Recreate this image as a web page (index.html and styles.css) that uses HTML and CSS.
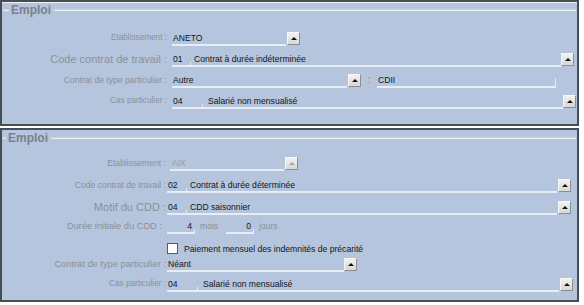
FILE: index.html
```html
<!DOCTYPE html>
<html lang="fr">
  <head>
    <meta charset="utf-8">
    <title>Emploi</title>
    <link rel="stylesheet" href="styles.css">
  </head>
  <body>
    <section class="panel panel-top">
      <div class="legend"><span>Emploi</span></div>

      <div class="row first">
        <span class="lbl small">Etablissement :</span>
        <span class="fld" style="width:113px">ANETO</span>
        <span class="btn"></span>
      </div>
      <div class="row">
        <span class="lbl big">Code contrat de travail :</span>
        <span class="fld tick" style="width:18px">01</span>
        <span class="fld pad3" style="width:367px">Contrat à durée indéterminée</span>
        <span class="btn flush"></span>
      </div>
      <div class="row">
        <span class="lbl">Contrat de type particulier :</span>
        <span class="fld" style="width:174px">Autre</span>
        <span class="btn"></span>
        <span class="sep">:</span>
        <span class="fld tick tall" style="width:178px">CDII</span>
      </div>
      <div class="row">
        <span class="lbl small">Cas particulier :</span>
        <span class="fld tick" style="width:30px">04</span>
        <span class="fld pad5" style="width:355px">Salarié non mensualisé</span>
        <span class="btn flush"></span>
      </div>
    </section>

    <section class="panel panel-bottom">
      <div class="legend"><span>Emploi</span></div>

      <div class="row first">
        <span class="lbl">Etablissement :</span>
        <span class="fld off" style="width:112px">AIX</span>
        <span class="btn disabled"></span>
      </div>
      <div class="row gap8">
        <span class="lbl">Code contrat de travail :</span>
        <span class="fld tick" style="width:19px">02</span>
        <span class="fld pad3" style="width:367px">Contrat à durée déterminée</span>
        <span class="btn"></span>
      </div>
      <div class="row gap8">
        <span class="lbl big">Motif du CDD :</span>
        <span class="fld tick" style="width:19px">04</span>
        <span class="fld pad3" style="width:367px">CDD saisonnier</span>
        <span class="btn"></span>
      </div>
      <div class="row gap5">
        <span class="lbl mid inset">Durée initiale du CDD :</span>
        <span class="fld num tick" style="width:25px">4</span>
        <span class="unit" style="width:26px">mois</span>
        <span class="fld num tick" style="width:25px">0</span>
        <span class="unit">jours</span>
      </div>
      <div class="check-row">
        <span class="lbl"></span>
        <span class="chk"></span>
        <span class="chk-text">Paiement mensuel des indemnités de précarité</span>
      </div>
      <div class="row gap4">
        <span class="lbl mid">Contrat de type particulier :</span>
        <span class="fld" style="width:176px">Néant</span>
        <span class="btn flush"></span>
      </div>
      <div class="row gap6">
        <span class="lbl small">Cas particulier :</span>
        <span class="fld tick" style="width:30px">04</span>
        <span class="fld pad5" style="width:356px">Salarié non mensualisé</span>
        <span class="btn"></span>
      </div>
    </section>
  </body>
</html>
```

FILE: styles.css
```css
body {
  margin: 0;
  background: #fff;
  font-family: "Liberation Sans", Arial, sans-serif;
  font-size: 8.6px;
  color: #141414;
}

.panel {
  width: 575px;
  border: 2px solid #474c55;
  background: #b5c5de;
}
.panel-top {
  padding-bottom: 15px;
  box-shadow: inset 0 1px #eef1f6;
}
.panel-bottom {
  margin-top: 2px;
  padding-bottom: 8px;
}

/* group box title with etched line */
.legend {
  display: flex;
  align-items: center;
  height: 16px;
  font-size: 12px;
  font-weight: bold;
  color: #7b8089;
}
.legend::before,
.legend::after {
  content: "";
  border-top: 1px solid #cbd3de;
  border-bottom: 1px solid #e9edf4;
}
.legend::before {
  width: 6px;
  margin: 0 2px 0 1px;
}
.legend::after {
  flex: 1;
  margin: 0 1px 0 3px;
}
.panel-bottom .legend::before {
  width: 3px;
}

.row {
  display: flex;
  align-items: flex-start;
  margin-top: 7px;
}
.panel-top .row.first { margin-top: 14px; }
.panel-bottom .row.first { margin-top: 11px; }
.row.gap8 { margin-top: 8px; }
.row.gap6 { margin-top: 6px; }
.row.gap5 { margin-top: 5px; }
.row.gap4 { margin-top: 4px; }

.lbl {
  flex: none;
  width: 165px;
  margin-right: 5px;
  text-align: right;
  line-height: 12px;
  white-space: nowrap;
  color: #8b9099;
}
.panel-bottom .lbl {
  width: 164px;
  margin-right: 1px;
}
.lbl.small { font-size: 8.2px; }
.lbl.mid { font-size: 9.3px; }
.lbl.big { font-size: 11px; }
.lbl.inset {
  box-sizing: border-box;
  padding-right: 4px;
}

.fld {
  position: relative;
  flex: none;
  box-sizing: content-box;
  height: 12px;
  line-height: 12px;
  padding-left: 1px;
  border-bottom: 2px solid #e8edf5;
  white-space: nowrap;
  overflow: hidden;
}
.fld.pad3 { padding-left: 3px; }
.fld.pad5 { padding-left: 5px; }
.fld.off {
  margin-left: 3px;
  padding-left: 2px;
  color: #939aa5;
}
.fld.num {
  text-align: right;
  padding: 0 3px 0 0;
}
.fld.tick::after {
  content: "";
  position: absolute;
  right: 0;
  bottom: 0;
  width: 1px;
  height: 3px;
  background: #e8edf5;
}
.fld.tall::after { height: 8px; }

.unit {
  flex: none;
  margin-left: 5px;
  line-height: 12px;
  color: #8b9099;
}

.sep {
  flex: none;
  width: 16px;
  text-align: center;
  line-height: 12px;
  font-size: 10px;
  color: #8b9099;
}

/* little combo arrow button */
.btn {
  flex: none;
  display: flex;
  align-items: center;
  justify-content: center;
  box-sizing: border-box;
  width: 13px;
  height: 13px;
  margin-left: 1px;
  border: 1px solid;
  border-color: #f7f7f7 #8e8e8e #8e8e8e #f7f7f7;
  background: linear-gradient(#f1f1f1, #d8d8d8);
}
.btn.flush { margin-left: 0; }
.btn::before {
  content: "";
  border-left: 3px solid transparent;
  border-right: 3px solid transparent;
  border-bottom: 3px solid #111;
}
.btn.disabled::before { border-bottom-color: #a6a6a6; }

.check-row {
  display: flex;
  align-items: center;
  margin-top: 9px;
  height: 11px;
}
.chk {
  flex: none;
  box-sizing: border-box;
  width: 11px;
  height: 11px;
  border: 1px solid #565b63;
  background: #fff;
}
.chk-text {
  margin-left: 6px;
  white-space: nowrap;
}
```
